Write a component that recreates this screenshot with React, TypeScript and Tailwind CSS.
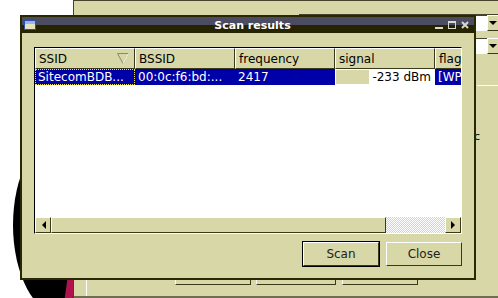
import React from "react";

const raised =
  "border border-t-white border-l-white border-b-[#3a391c] border-r-[#3a391c]";

function HeaderCell({ label, width, sort }: { label: string; width: string; sort?: boolean }) {
  return (
    <div className={`${width} h-full shrink-0 bg-[#d8d7a7] ${raised} flex items-center justify-between pl-[3px] pr-[5px] overflow-hidden`}>
      <span className="whitespace-nowrap">{label}</span>
      {sort && (
        <svg width="12" height="11" viewBox="0 0 12 11">
          <path d="M0.5 0.5 H11.5 L6 10.5 Z" fill="none" stroke="#8a896a" />
          <path d="M6 10.5 L11.5 0.5" stroke="#ffffff" />
        </svg>
      )}
    </div>
  );
}

function Arrow({ dir }: { dir: "left" | "right" }) {
  return (
    <div className={`w-[16px] h-full shrink-0 bg-[#d8d7a7] ${raised} flex items-center justify-center`}>
      <svg width="5" height="8" viewBox="0 0 5 8">
        {dir === "left" ? <path d="M5 0 V8 L1 4 Z" fill="#000" /> : <path d="M0 0 V8 L4 4 Z" fill="#000" />}
      </svg>
    </div>
  );
}

export default function App() {
  return (
    <div
      className="relative w-[498px] h-[298px] bg-white overflow-hidden text-[12px] text-black"
      style={{ fontFamily: '"DejaVu Sans", sans-serif' }}
    >
      {/* desktop background bits */}
      <div className="absolute left-[13px] top-[135px] w-[96px] h-[180px] rounded-[50%] bg-black" />
      <div className="absolute left-[66px] top-[278px] w-[8px] h-[22px] bg-[#b0124e] skew-x-[-8deg]" />

      {/* window behind */}
      <div className="absolute left-[73px] top-0 w-[425px] h-[298px] bg-[#d8d7a7] border-l border-t border-[#45442a]">
        <div className="absolute left-[12px] top-[278px] w-px h-[20px] bg-white" />
        <div className="absolute left-[225px] top-[13px] w-[200px] h-px bg-[#45442a]" />
        {/* combos at the right edge */}
        <div className="absolute left-[401px] top-[14px] w-[24px] h-[16px] flex">
          <div className="flex-1 bg-white border-t border-[#45442a]" />
          <div className={`w-[12px] h-full bg-[#d8d7a7] ${raised} flex items-center justify-center`}>
            <svg width="8" height="5" viewBox="0 0 8 5"><path d="M0 0 H8 L4 4 Z" fill="#000" /></svg>
          </div>
        </div>
        <div className="absolute left-[401px] top-[37px] w-[24px] h-[16px] flex">
          <div className="flex-1 bg-white border-t border-[#45442a]" />
          <div className={`w-[12px] h-full bg-[#d8d7a7] ${raised} flex items-center justify-center`}>
            <svg width="8" height="5" viewBox="0 0 8 5"><path d="M0 0 H8 L4 4 Z" fill="#000" /></svg>
          </div>
        </div>
        <div className="absolute left-[403px] top-[84px] w-[22px] h-px bg-white" />
        <span className="absolute left-[400px] top-[128px] text-[11px]">c</span>
        {/* buttons peeking below the dialog */}
        <div className={`absolute left-[101px] top-[250px] w-[76px] h-[34px] ${raised}`} />
        <div className={`absolute left-[182px] top-[250px] w-[80px] h-[34px] ${raised}`} />
        <div className={`absolute left-[268px] top-[250px] w-[76px] h-[34px] ${raised}`} />
        <div className="absolute left-0 top-[295px] w-full h-[2px] bg-[#6f6e52]" />
      </div>

      {/* Scan results dialog */}
      <div className="absolute left-[20px] top-[15px] w-[456px] h-[265px] border-2 border-[#2a2800] bg-[#d8d7a7] flex flex-col">
        <div className="relative h-[16px] shrink-0 flex flex-col">
          <div className="h-[8px] bg-[#4b4b62]" />
          <div className="h-[8px] bg-[#262400]" />
          <div className="absolute inset-0 flex items-center justify-between px-[2px]">
            <svg width="12" height="10" viewBox="0 0 12 10">
              <rect x="0" y="0" width="12" height="10" fill="#2c4fb0" />
              <rect x="1" y="1" width="10" height="3" fill="#9ab6ee" />
              <rect x="1" y="4" width="10" height="5" fill="#e6e2c0" />
            </svg>
            <span className="text-white font-bold text-[11px] leading-none ml-[34px]">Scan results</span>
            <div className="flex items-center gap-[5px] pr-[3px]">
              <svg width="8" height="8" viewBox="0 0 8 8"><rect x="0" y="6" width="8" height="2" fill="#d8d8d0" /></svg>
              <svg width="8" height="8" viewBox="0 0 8 8"><rect x="0.5" y="0.5" width="7" height="7" fill="none" stroke="#d8d8d0" /><rect x="0" y="0" width="8" height="2" fill="#d8d8d0" /></svg>
              <svg width="8" height="8" viewBox="0 0 8 8"><path d="M1 1 L7 7 M7 1 L1 7" stroke="#d8d8d0" strokeWidth="2" /></svg>
            </div>
          </div>
        </div>

        <div className="flex-1 flex flex-col px-[12px] pt-[14px] pb-[11px]">
          {/* list view */}
          <div className="h-[187px] w-[428px] border border-t-[#000] border-l-[#000] border-b-white border-r-white flex flex-col bg-white">
            <div className="flex-1 flex flex-col overflow-hidden">
              <div className="h-[21px] flex shrink-0">
                <HeaderCell label="SSID" width="w-[100px]" sort />
                <HeaderCell label="BSSID" width="w-[100px]" />
                <HeaderCell label="frequency" width="w-[100px]" />
                <HeaderCell label="signal" width="w-[100px]" />
                <HeaderCell label="flags" width="w-[100px]" />
              </div>
              <div className="h-[16px] flex shrink-0 text-white">
                <div className="w-[100px] bg-[#0000a8] border border-dotted border-[#f0e060] pl-[2px] leading-[14px] whitespace-nowrap overflow-hidden">
                  SitecomBDB...
                </div>
                <div className="w-[100px] bg-[#0000a8] pl-[3px] leading-[16px] whitespace-nowrap overflow-hidden">00:0c:f6:bd:...</div>
                <div className="w-[100px] bg-[#0000a8] pl-[3px] leading-[16px]">2417</div>
                <div className="w-[100px] bg-white flex items-center pl-[1px] text-black">
                  <div className="w-[33px] h-[14px] bg-[#d8d7a7]" />
                  <span className="ml-auto pr-[4px] leading-[16px]">-233 dBm</span>
                </div>
                <div className="flex-1 bg-[#0000a8] pl-[3px] leading-[16px] whitespace-nowrap overflow-hidden">[WPA2-PSK]</div>
              </div>
            </div>
            {/* horizontal scrollbar */}
            <div className="h-[16px] flex shrink-0 bg-[repeating-conic-gradient(#d8d7a7_0_25%,#ffffff_0_50%)] bg-[length:2px_2px]">
              <Arrow dir="left" />
              <div className={`w-[335px] h-full bg-[#d8d7a7] ${raised}`} />
              <div className="flex-1" />
              <Arrow dir="right" />
            </div>
          </div>

          <div className="flex-1" />
          <div className="flex justify-end gap-[6px]">
            <div className="border border-black">
              <button className={`w-[76px] h-[24px] bg-[#d8d7a7] ${raised} text-[#222]`}>Scan</button>
            </div>
            <button className={`w-[76px] h-[24px] mt-px bg-[#d8d7a7] ${raised} text-[#222]`}>Close</button>
          </div>
        </div>
      </div>
    </div>
  );
}
